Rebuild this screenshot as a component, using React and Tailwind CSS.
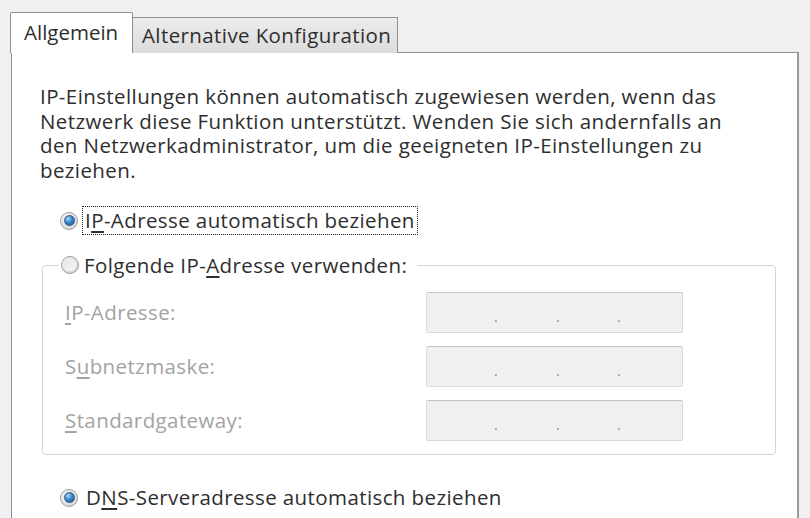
const font = { fontFamily: '"Open Sans", "Noto Sans", sans-serif' };

const Radio = ({ checked }) => (
  <span className="w-[18px] h-[18px] shrink-0 rounded-full border border-[#9a9c9e] bg-gradient-to-br from-[#f4f4f4] to-[#d4d4d4] flex items-center justify-center">
    {checked ? (
      <span className="w-[11px] h-[11px] rounded-full bg-[radial-gradient(circle_at_35%_30%,#a9d6f5_0%,#3f86c8_45%,#1a4f86_100%)] border border-[#2a5b8e]" />
    ) : (
      <span className="w-[12px] h-[12px] rounded-full bg-gradient-to-br from-[#e6e6e6] to-[#f8f8f8]" />
    )}
  </span>
);

const IpField = () => (
  <div className="w-[257px] h-[41px] bg-[#f0f0f0] border border-[#dadada] border-t-[#c4c4c4] rounded-[2px] grid grid-cols-[67px_62px_61px_1fr] items-center pt-[10px] text-[#8a8a8a] text-[14px]">
    <span />
    <span>.</span>
    <span>.</span>
    <span>.</span>
  </div>
);

const FieldRow = ({ children }) => (
  <div className="flex items-center justify-between pl-[22px] pr-[92px]">
    <span className="text-[#a3a3a3]">{children}</span>
    <IpField />
  </div>
);

export default function App() {
  return (
    <div
      className="w-[810px] h-[518px] overflow-hidden bg-[#f0f0f0] pt-[12px] pl-[11px] pr-[11px] text-[20.5px] tracking-[0.4px] text-[#2e2e2e] leading-[24.5px]"
      style={font}
    >
      <div className="flex items-end -ml-px">
        <div className="relative z-10 w-[123px] h-[41px] bg-white border border-b-0 border-[#8e9096] rounded-t-[2px] pl-[13px] pt-[7px] whitespace-nowrap tracking-normal">
          Allgemein
        </div>
        <div className="w-[265px] h-[36px] bg-gradient-to-b from-[#ececec] to-[#dcdcdc] border border-l-0 border-b-0 border-[#8e9096] pl-[9px] pt-[5px] whitespace-nowrap">
          Alternative Konfiguration
        </div>
      </div>

      <div className="-mt-px h-[600px] bg-white border border-[#8e9096] border-r-2 border-r-[#9a9a9a] pt-[31px] pl-[28px]">
        <p className="whitespace-nowrap">
          IP-Einstellungen können automatisch zugewiesen werden, wenn das
          <br />
          Netzwerk diese Funktion unterstützt. Wenden Sie sich andernfalls an
          <br />
          den Netzwerkadministrator, um die geeigneten IP-Einstellungen zu
          <br />
          beziehen.
        </p>

        <div className="mt-[24px] flex items-center ml-[20px] h-[29px]">
          <Radio checked />
          <span className="ml-[4px] h-[29px] flex items-center px-[2px] border border-dotted border-[#222] whitespace-nowrap">
            I<u className="underline-offset-[3px]">P</u>-Adresse automatisch beziehen
          </span>
        </div>

        <fieldset className="mt-[18px] ml-[2px] w-[734px] border border-[#d5d5d5] rounded-[4px] px-0 pb-[13px]">
          <legend className="ml-[16px] px-[2px] flex items-center h-[24px]">
            <Radio />
            <span className="ml-[5px] pr-[8px] whitespace-nowrap">
              Folgende IP-<u className="underline-offset-[3px]">A</u>dresse verwenden:
            </span>
          </legend>
          <div className="mt-[15px] flex flex-col gap-[13px]">
            <FieldRow>
              <u className="underline-offset-[3px]">I</u>P-Adresse:
            </FieldRow>
            <FieldRow>
              S<u className="underline-offset-[3px]">u</u>bnetzmaske:
            </FieldRow>
            <FieldRow>
              <u className="underline-offset-[3px]">S</u>tandardgateway:
            </FieldRow>
          </div>
        </fieldset>

        <div className="mt-[28px] flex items-center ml-[20px] h-[29px]">
          <Radio checked />
          <span className="ml-[6px] px-[2px] whitespace-nowrap">
            D<u className="underline-offset-[3px]">N</u>S-Serveradresse automatisch beziehen
          </span>
        </div>
      </div>
    </div>
  );
}
